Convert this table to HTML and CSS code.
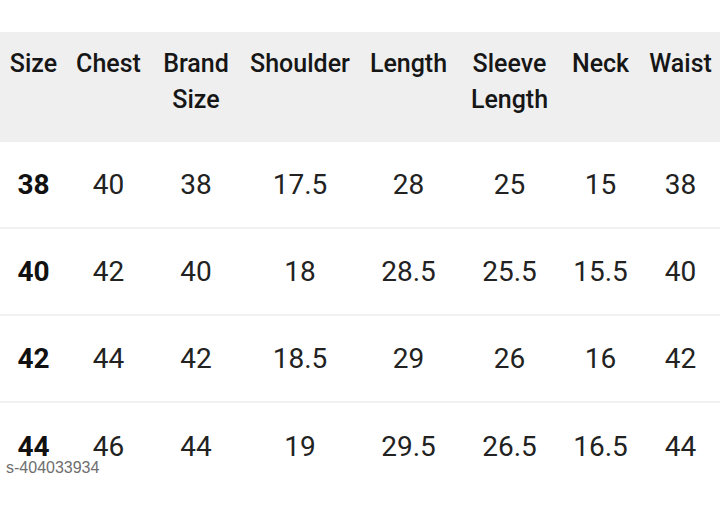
FILE: index.html
```html
<!DOCTYPE html>
<html>
<head>
<meta charset="utf-8">
<link rel="stylesheet" href="styles.css">
</head>
<body>
<div class="page">
  <div class="chart">
    <div class="row head">
      <div class="cell">Size</div>
      <div class="cell">Chest</div>
      <div class="cell">Brand<br>Size</div>
      <div class="cell">Shoulder</div>
      <div class="cell">Length</div>
      <div class="cell">Sleeve<br>Length</div>
      <div class="cell">Neck</div>
      <div class="cell">Waist</div>
    </div>
    <div class="row body">
      <div class="cell first">38</div><div class="cell">40</div><div class="cell">38</div><div class="cell">17.5</div><div class="cell">28</div><div class="cell">25</div><div class="cell">15</div><div class="cell">38</div>
    </div>
    <div class="row body">
      <div class="cell first">40</div><div class="cell">42</div><div class="cell">40</div><div class="cell">18</div><div class="cell">28.5</div><div class="cell">25.5</div><div class="cell">15.5</div><div class="cell">40</div>
    </div>
    <div class="row body">
      <div class="cell first">42</div><div class="cell">44</div><div class="cell">42</div><div class="cell">18.5</div><div class="cell">29</div><div class="cell">26</div><div class="cell">16</div><div class="cell">42</div>
    </div>
    <div class="row body last">
      <div class="cell first">44</div><div class="cell">46</div><div class="cell">44</div><div class="cell">19</div><div class="cell">29.5</div><div class="cell">26.5</div><div class="cell">16.5</div><div class="cell">44</div>
    </div>
  </div>
  <div class="watermark">s-404033934</div>
</div>
</body>
</html>
```
FILE: styles.css
```css
html, body {
  margin: 0;
  padding: 0;
  background: #ffffff;
}
.page {
  position: relative;
  width: 720px;
  height: 531px;
  padding-top: 32px;
  box-sizing: border-box;
  font-family: Roboto, "Noto Sans", sans-serif;
  color: #1e1e1e;
}
.row {
  display: grid;
  grid-template-columns: 67px 83px 92px 116px 101px 101px 81px 79px;
}
.cell {
  text-align: center;
}
.head {
  background: #efefef;
  height: 110px;
  box-sizing: border-box;
  padding-top: 14px;
  font-size: 25px;
  font-weight: 500;
  line-height: 36px;
  color: #161616;
}
.body {
  height: 87px;
  box-sizing: border-box;
  border-bottom: 2px solid #f1f1f1;
  align-items: center;
  font-size: 28px;
  line-height: 28px;
  font-weight: 400;
  color: #222222;
}
.body.last {
  border-bottom: none;
}
.first {
  font-weight: 700;
  color: #111111;
}
.watermark {
  position: absolute;
  left: 6px;
  top: 461px;
  font-family: "Liberation Sans", sans-serif;
  font-size: 16px;
  line-height: 13px;
  color: #6e6e6e;
}
```
